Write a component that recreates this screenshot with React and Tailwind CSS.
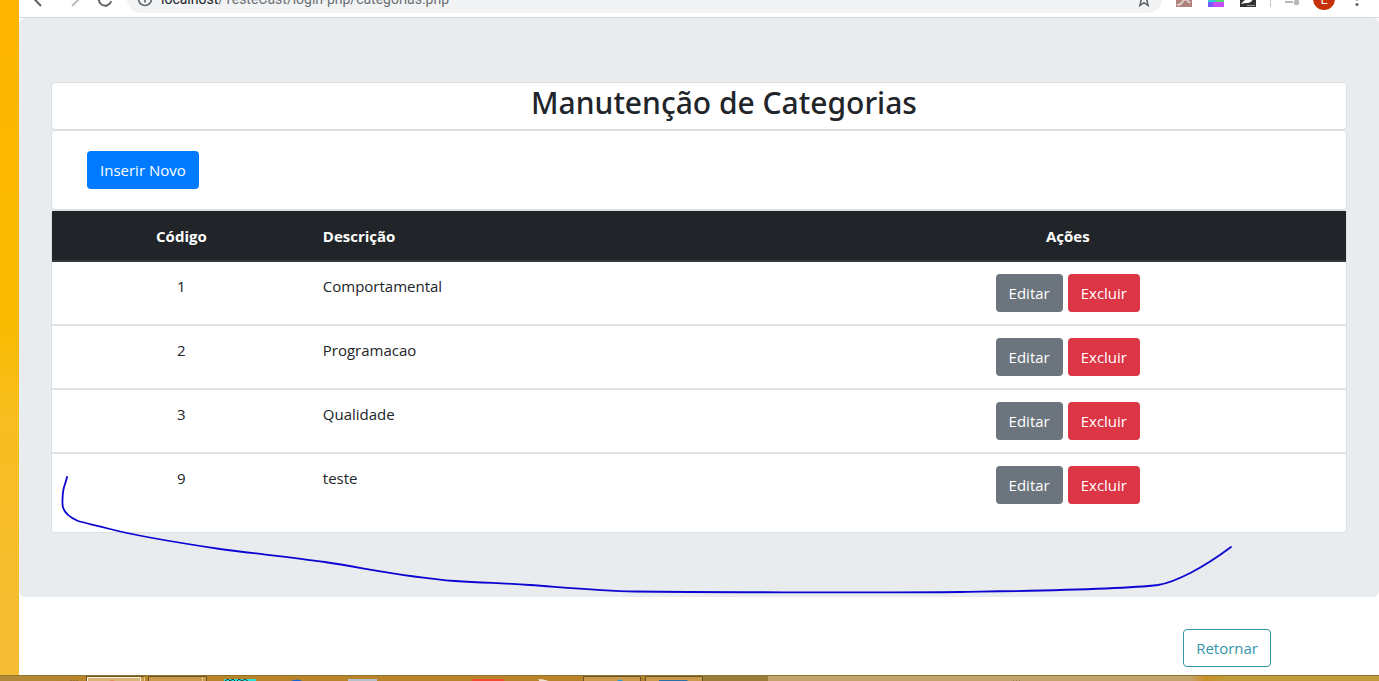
const categories = [
  { id: 1, name: 'Comportamental' },
  { id: 2, name: 'Programacao' },
  { id: 3, name: 'Qualidade' },
  { id: 9, name: 'teste' },
];

const iconButton = 'flex h-5 w-5 shrink-0 items-center justify-center';

function BrowserBar() {
  return (
    <header className="flex h-[18px] items-end overflow-hidden border-b border-[#d3d8dc] bg-white">
      <div className="flex h-[37px] w-full shrink-0 items-center pl-2.5 pr-3">
        <button type="button" aria-label="Voltar" className={`${iconButton} text-[#5f6368]`}>
          <svg viewBox="0 0 20 20" className="h-5 w-5" fill="none" stroke="currentColor" strokeWidth="2">
            <path d="M18 10H5M12 3.300 5.300 10l6.700 7" />
          </svg>
        </button>
        <button type="button" aria-label="Avançar" className={`${iconButton} ml-3 text-[#babcbe]`}>
          <svg viewBox="0 0 20 20" className="h-5 w-5" fill="none" stroke="currentColor" strokeWidth="2">
            <path d="M5 10h13M11 3l7 7-7 7" />
          </svg>
        </button>
        <button type="button" aria-label="Recarregar" className={`${iconButton} ml-3.5 text-[#5f6368]`}>
          <svg viewBox="0 0 20 20" className="h-5 w-5" fill="none" stroke="currentColor" strokeWidth="2">
            <path d="M15.600 7A6.400 6.400 0 1 0 16.200 12.200M16 3v5h-5" />
          </svg>
        </button>
        <div className="ml-3 flex h-7 min-w-0 flex-1 items-center rounded-full bg-[#f1f3f4] px-2">
          <svg viewBox="0 0 20 20" className="h-5 w-5 shrink-0" fill="none" stroke="#5f6368" strokeWidth="1.6">
            <circle cx="10" cy="10" r="6.5" />
            <path d="M10 9v4.500M10 6v1.600" />
          </svg>
          <p className="ml-1.5 flex-1 truncate font-['Roboto',sans-serif] text-sm text-[#6b6f73]">
            <span className="text-[#202124]">localhost</span>/TesteCast/login-php/categorias.php
          </p>
          <button type="button" aria-label="Favoritar" className={iconButton}>
            <svg viewBox="0 0 20 20" className="h-5 w-5" fill="none" stroke="#5f6368" strokeWidth="1.5">
              <path d="m10 3.500 1.800 4.600 4.700.3-3.600 3 1.200 5.100-4.100-2.800-4.100 2.800 1.200-5.100-3.600-3 4.700-.3z" />
            </svg>
          </button>
        </div>
        <div className="ml-3.5 flex items-center gap-4">
          <svg viewBox="0 0 16 16" className="h-4 w-4">
            <path fill="#b0807f" d="M0 0h16v16H0z" />
            <path d="M1 14q4 0 6-4M7 10q2-3 5 0l2 2" stroke="#d9cdc6" strokeWidth="2" fill="none" />
          </svg>
          <svg viewBox="0 0 16 16" className="h-4 w-4">
            <path fill="#35c9d0" d="M0 0h8v11H0z" />
            <path fill="#55dc75" d="M8 0h8v11H8z" />
            <path fill="#735cff" d="M0 11h8v5H0z" />
            <path fill="#c64cf6" d="M5 11h11v5H5z" />
          </svg>
          <svg viewBox="0 0 16 16" className="h-4 w-4">
            <path fill="#333" d="M0 0h16v16H0z" />
            <path d="M1 13Q5 7 13 7q-1 5-6 5-3 0-6 1z" fill="#fff" />
            <path d="M7 14.500h8" stroke="#999" />
          </svg>
        </div>
        <span className="ml-3.5 h-4 w-px bg-[#c5c8cb]" />
        <svg viewBox="0 0 20 20" className="ml-3 h-5 w-5 shrink-0" fill="none" stroke="#b5b7b9" strokeWidth="2">
          <path d="M2 5h9M2 9h9M2 13h8M15 14V4h3" />
          <circle cx="13.5" cy="13.5" r="1.8" fill="#b5b7b9" />
        </svg>
        <span className="ml-2.5 flex h-[22px] w-[22px] shrink-0 items-center justify-center rounded-full bg-[#c53208] font-['Open_Sans',sans-serif] text-sm text-white">
          L
        </span>
        <button type="button" aria-label="Menu" className={`${iconButton} ml-3`}>
          <svg viewBox="0 0 20 20" className="h-5 w-5" fill="#5f6368">
            <circle cx="10" cy="4" r="1.6" />
            <circle cx="10" cy="10" r="1.6" />
            <circle cx="10" cy="15.5" r="1.6" />
          </svg>
        </button>
      </div>
    </header>
  );
}

function Taskbar() {
  return (
    <footer className="flex h-1.5 items-start overflow-hidden border-t border-[#8f7630] bg-[linear-gradient(90deg,#b08a38_0,#b9832a_90px,#b9832a_620px,#9b7c38_703px,#9b7c38_768px,#c4a26c_768px,#c4a26c_1190px,#c8902b_1205px,#c09b38_1225px)]">
      <svg viewBox="0 0 1024 6" className="h-1.5 w-[1024px] shrink-0">
        <path d="M70 5h2M73 5h2M76 5h2M1013 5h1M1016 5h1M1019 5h1" stroke="#806330" />
        <path d="M86.500 6V.5h58V6M148.500 6V.5h58V6M583.500 6V.5h57V6M645.500 6V.5h57V6" fill="#c99a4c" stroke="#6d5222" />
        <path d="M87.500 6V1.500h53V6" fill="#d8b577" stroke="#fff3d8" />
        <path d="M144.500 6V1M202.500 6V1" stroke="#e5c88e" />
        <path d="M107 6q5-3 11 0" fill="#ee5c32" />
        <path d="M224 3h32v3h-32z" fill="#27e5d6" />
        <path d="m225 5 3-2 2 2 3-2 3 3 3-3 3 2 3-2 4 3" fill="none" stroke="#153e3b" />
        <path d="M289 6q8-5 15 0" fill="#1765d5" />
        <path d="M348 3h29v3h-29z" fill="#b5c1c8" />
        <path d="M472 3h32v3h-32z" fill="#f04b2e" />
        <path d="M538 3q7 0 13 3h-11z" fill="#eee4d0" />
        <path d="M616 6q4-5 8 0" fill="#249bd7" />
        <path d="M659 4h28l2 2h-30z" fill="#2b6fa9" />
      </svg>
    </footer>
  );
}

const button = 'h-[38px] rounded px-[13px] text-[15px] leading-6';

export default function App() {
  return (
    <div className="relative flex min-h-screen flex-col bg-white font-['Open_Sans',sans-serif] text-[15px] leading-6 text-[#212529]">
      <div className="flex flex-1">
        <div className="w-[19px] shrink-0 bg-[linear-gradient(180deg,#ffb500_0%,#fabb00_48%,#f7be20_62%,#f5bc35_100%)]" />
        <div className="min-w-0 flex-1">
          <BrowserBar />
          <main>
            <section className="rounded-md bg-[#e9ecef] px-8 py-16">
              <div className="h-12 rounded border border-[#dcdfe1] bg-white pl-[50px] text-center">
                <h1 className="font-['Noto_Sans','Open_Sans',sans-serif] text-3xl font-medium leading-10">Manutenção de Categorias</h1>
              </div>
              <div className="h-20 rounded border border-[#dcdfe1] bg-white px-[35px] py-5">
                <button type="button" className={`${button} bg-[#007bff] text-white`}>Inserir Novo</button>
              </div>
              <div className="rounded border border-[#dcdfe1] bg-white pb-4">
                <table className="w-full table-fixed border-separate border-spacing-0">
                  <thead className="bg-[#212529] text-white [&_th]:h-[51px] [&_th]:border-b-2 [&_th]:border-[#32383e] [&_th]:px-3">
                    <tr>
                      <th scope="col" className="w-[20%] text-center font-bold">Código</th>
                      <th scope="col" className="w-[37%] text-left font-bold">Descrição</th>
                      <th scope="col" className="text-center font-bold">Ações</th>
                    </tr>
                  </thead>
                  <tbody className="[&_td]:border-b-2 [&_td]:border-[#dee2e6] [&_td]:px-3 [&_td]:py-3 [&_tr:last-child_td]:border-b-0">
                    {categories.map((category) => (
                      <tr key={category.id} className="align-top">
                        <td className="text-center">{category.id}</td>
                        <td>{category.name}</td>
                        <td>
                          <div className="flex justify-center gap-[5px]">
                            <button type="button" className={`${button} bg-[#6c757d] text-white`}>Editar</button>
                            <button type="button" className={`${button} bg-[#dc3545] text-white`}>Excluir</button>
                          </div>
                        </td>
                      </tr>
                    ))}
                  </tbody>
                </table>
              </div>
            </section>
            <div className="flex justify-end pb-2 pr-[108px] pt-8">
              <a href="#inicio" className="rounded border border-[#3596a8] px-3 py-1.5 text-[#3596a8]">Retornar</a>
            </div>
          </main>
        </div>
      </div>
      <Taskbar />
      <svg viewBox="0 0 1379 681" className="pointer-events-none absolute left-0 top-0 w-full" fill="none" stroke="#0c05d2" strokeWidth="1.8" strokeLinecap="round" aria-hidden="true">
        <path d="M67 477C65 487 62 486 62.500 504C62.500 512 69 517 78 521C88 524 96 525 110 529C140 537 180 543 220 549C258 554 290 557 325 562C370 569 405 577 455 581C485 583 502 583 530 585C570 588 600 591 635 591.500C680 592 880 593 960 592C1020 591 1115 590 1158 585C1176 582 1203 568 1231 547" />
      </svg>
    </div>
  );
}
